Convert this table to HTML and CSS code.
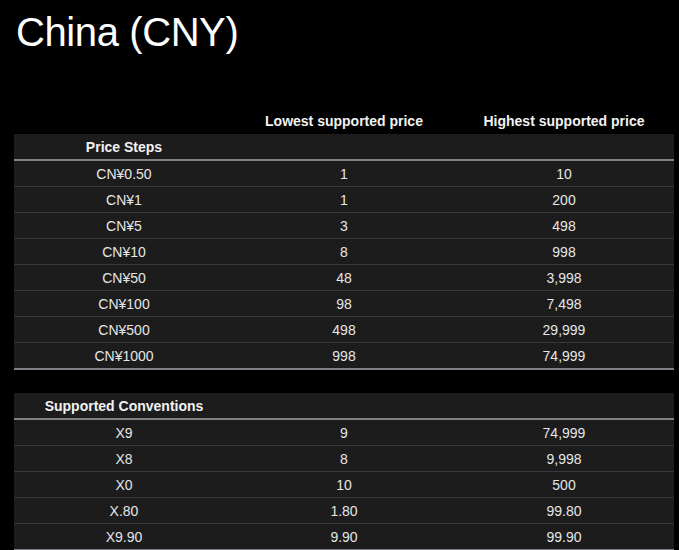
FILE: index.html
```html
<!DOCTYPE html>
<html lang="en">
<head>
<meta charset="utf-8">
<title>China (CNY)</title>
<link rel="stylesheet" href="styles.css">
</head>
<body>
<main class="page">
  <h1 class="title">China (CNY)</h1>
  <div class="colheads">
    <div></div>
    <div>Lowest supported price</div>
    <div>Highest supported price</div>
  </div>
  <section class="table">
    <div class="section-head"><div>Price Steps</div><div></div><div></div></div>
    <div class="row"><div>CN¥0.50</div><div>1</div><div>10</div></div>
    <div class="row"><div>CN¥1</div><div>1</div><div>200</div></div>
    <div class="row"><div>CN¥5</div><div>3</div><div>498</div></div>
    <div class="row"><div>CN¥10</div><div>8</div><div>998</div></div>
    <div class="row"><div>CN¥50</div><div>48</div><div>3,998</div></div>
    <div class="row"><div>CN¥100</div><div>98</div><div>7,498</div></div>
    <div class="row"><div>CN¥500</div><div>498</div><div>29,999</div></div>
    <div class="row last"><div>CN¥1000</div><div>998</div><div>74,999</div></div>
  </section>
  <section class="table second">
    <div class="section-head"><div>Supported Conventions</div><div></div><div></div></div>
    <div class="row"><div>X9</div><div>9</div><div>74,999</div></div>
    <div class="row"><div>X8</div><div>8</div><div>9,998</div></div>
    <div class="row"><div>X0</div><div>10</div><div>500</div></div>
    <div class="row"><div>X.80</div><div>1.80</div><div>99.80</div></div>
    <div class="row last"><div>X9.90</div><div>9.90</div><div>99.90</div></div>
  </section>
</main>
</body>
</html>
```
FILE: styles.css
```css
html, body {
  margin: 0;
  padding: 0;
  background: #000;
}
body {
  font-family: "Liberation Sans", Arial, sans-serif;
  color: #e6e6e6;
  overflow: hidden;
}
.page {
  padding: 0 5px 0 14px;
  width: 660px;
}
.title {
  margin: 8px 0 52px 2px;
  font-size: 40px;
  line-height: 48px;
  font-weight: 400;
  letter-spacing: -0.4px;
  color: #fff;
}
.colheads, .section-head, .row {
  display: grid;
  grid-template-columns: repeat(3, 1fr);
  align-items: center;
  text-align: center;
  font-size: 14px;
}
.colheads {
  height: 26px;
  font-weight: 700;
  color: #f2f2f2;
}
.section-head {
  height: 25px;
  background: #1c1c1d;
  border-bottom: 2px solid #7e8185;
  font-weight: 700;
  color: #f2f2f2;
}
.row {
  height: 25px;
  background: #1c1c1d;
  border-bottom: 1px solid #38393b;
}
.row.last {
  border-bottom: 2px solid #7e8185;
}
.table.second {
  margin-top: 23px;
}
```
